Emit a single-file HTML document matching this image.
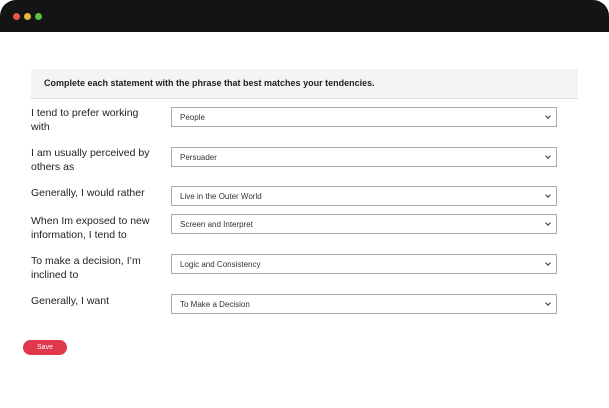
<!DOCTYPE html>
<html><head><style>
*{margin:0;padding:0;box-sizing:border-box}
body{width:609px;height:408px;background:#fff;position:relative;overflow:hidden;font-family:"Liberation Sans",sans-serif}
.bar{position:absolute;left:0;top:0;width:609px;height:32px;background:#141414;border-radius:16px 16px 0 0}
.dot{position:absolute;top:13px;width:7px;height:7px;border-radius:50%}
.hd{position:absolute;left:31px;top:69px;width:547px;height:30px;background:#f4f4f4;border-bottom:1px solid #dcdcdc;font-size:9px;font-weight:bold;color:#222;padding:9px 0 0 13px}
.lb{position:absolute;left:31px;font-size:10.5px;line-height:14px;color:#222;width:122px}
.sel{position:absolute;left:171px;width:386px;height:20px;border:1px solid #aaa;font-size:8px;color:#333;padding:5px 0 0 8px;background:#fff}
.sel:after{content:"";position:absolute;right:6px;top:6px;width:3px;height:3px;border-right:1px solid #333;border-bottom:1px solid #333;transform:rotate(45deg)}
.btn{position:absolute;left:23px;top:340px;width:44px;height:15px;border-radius:8px;background:#e0374b;color:#fff;font-size:7px;text-align:center;line-height:15px}
</style></head><body>
<div class="bar"></div>
<div class="dot" style="left:13px;background:#e9564c"></div>
<div class="dot" style="left:24px;background:#e2b93b"></div>
<div class="dot" style="left:35px;background:#5fbf3e"></div>
<div class="hd">Complete each statement with the phrase that best matches your tendencies.</div>
<div class="lb" style="top:106px">I tend to prefer working with</div>
<div class="sel" style="top:107px">People</div>
<div class="lb" style="top:146px">I am usually perceived by others as</div>
<div class="sel" style="top:147px">Persuader</div>
<div class="lb" style="top:186px">Generally, I would rather</div>
<div class="sel" style="top:186px">Live in the Outer World</div>
<div class="lb" style="top:214px">When Im exposed to new information, I tend to</div>
<div class="sel" style="top:214px">Screen and Interpret</div>
<div class="lb" style="top:254px">To make a decision, I’m inclined to</div>
<div class="sel" style="top:254px">Logic and Consistency</div>
<div class="lb" style="top:294px">Generally, I want</div>
<div class="sel" style="top:294px">To Make a Decision</div>
<div class="btn">Save</div>
</body></html>
